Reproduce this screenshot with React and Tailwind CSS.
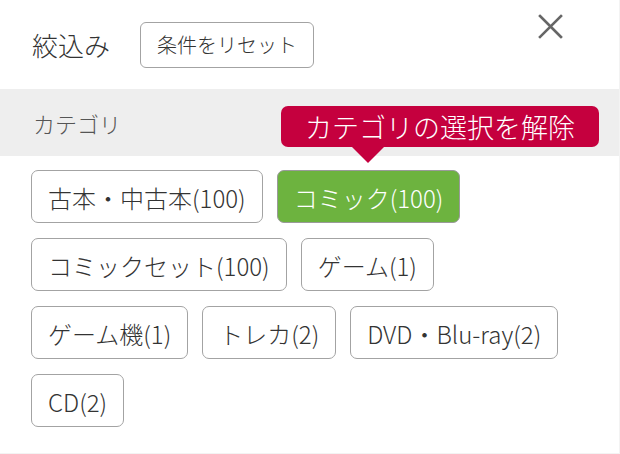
import React from "react";

const items = [
  { label: "古本・中古本(100)", active: false },
  { label: "コミック(100)", active: true },
  { label: "コミックセット(100)", active: false },
  { label: "ゲーム(1)", active: false },
  { label: "ゲーム機(1)", active: false },
  { label: "トレカ(2)", active: false },
  { label: "DVD・Blu-ray(2)", active: false },
  { label: "CD(2)", active: false },
];

export default function App() {
  return (
    <div
      className="w-[620px] h-[454px] bg-[#f3f3f3] overflow-hidden font-light"
      style={{ fontFamily: '"Noto Sans CJK JP", "Noto Sans", sans-serif' }}
    >
      <div className="relative w-[619px] h-[453px] bg-white">
        <div className="h-[89px] flex items-center pl-[32px]">
          <span className="text-[26px] leading-none text-[#333]">絞込み</span>
          <button className="ml-[30px] h-[46px] px-4 border border-[#a3a3a3] rounded-[6px] text-[20px] leading-none text-[#333] bg-white">
            条件をリセット
          </button>
        </div>
        <button className="absolute left-[536px] top-[12px] w-[29px] h-[29px] flex items-center justify-center">
          <svg width="25" height="25" viewBox="0 0 25 25">
            <path d="M2 2 L23 23 M23 2 L2 23" stroke="#666" strokeWidth="2.6" strokeLinecap="square" fill="none" />
          </svg>
        </button>
        <div className="h-[67px] bg-[#eeeeee] flex items-center pl-[33px]">
          <span className="text-[22px] leading-none text-[#555]">カテゴリ</span>
        </div>
        <div className="px-[31px] pt-[14px] flex flex-wrap gap-x-[14px] gap-y-[15px]">
          {items.map((it) =>
            it.active ? (
              <button
                key={it.label}
                className="h-[53px] px-[16px] border border-[#9a9a9a] rounded-[7px] bg-[#6db33f] text-white text-[24px] leading-none pt-[2px]"
              >
                {it.label}
              </button>
            ) : (
              <button
                key={it.label}
                className="h-[53px] px-[16px] border border-[#a3a3a3] rounded-[7px] bg-white text-[#333] text-[24px] leading-none pt-[2px]"
              >
                {it.label}
              </button>
            )
          )}
        </div>
        <div className="absolute left-[281px] top-[106px] w-[318px] h-[41px] bg-[#c5003e] rounded-[7px] flex items-center justify-center">
          <span className="text-[27px] leading-none text-white">カテゴリの選択を解除</span>
          <div className="absolute left-[70px] top-[40px] w-0 h-0 border-l-[17px] border-r-[17px] border-t-[17px] border-l-transparent border-r-transparent border-t-[#c5003e]" />
        </div>
      </div>
    </div>
  );
}
